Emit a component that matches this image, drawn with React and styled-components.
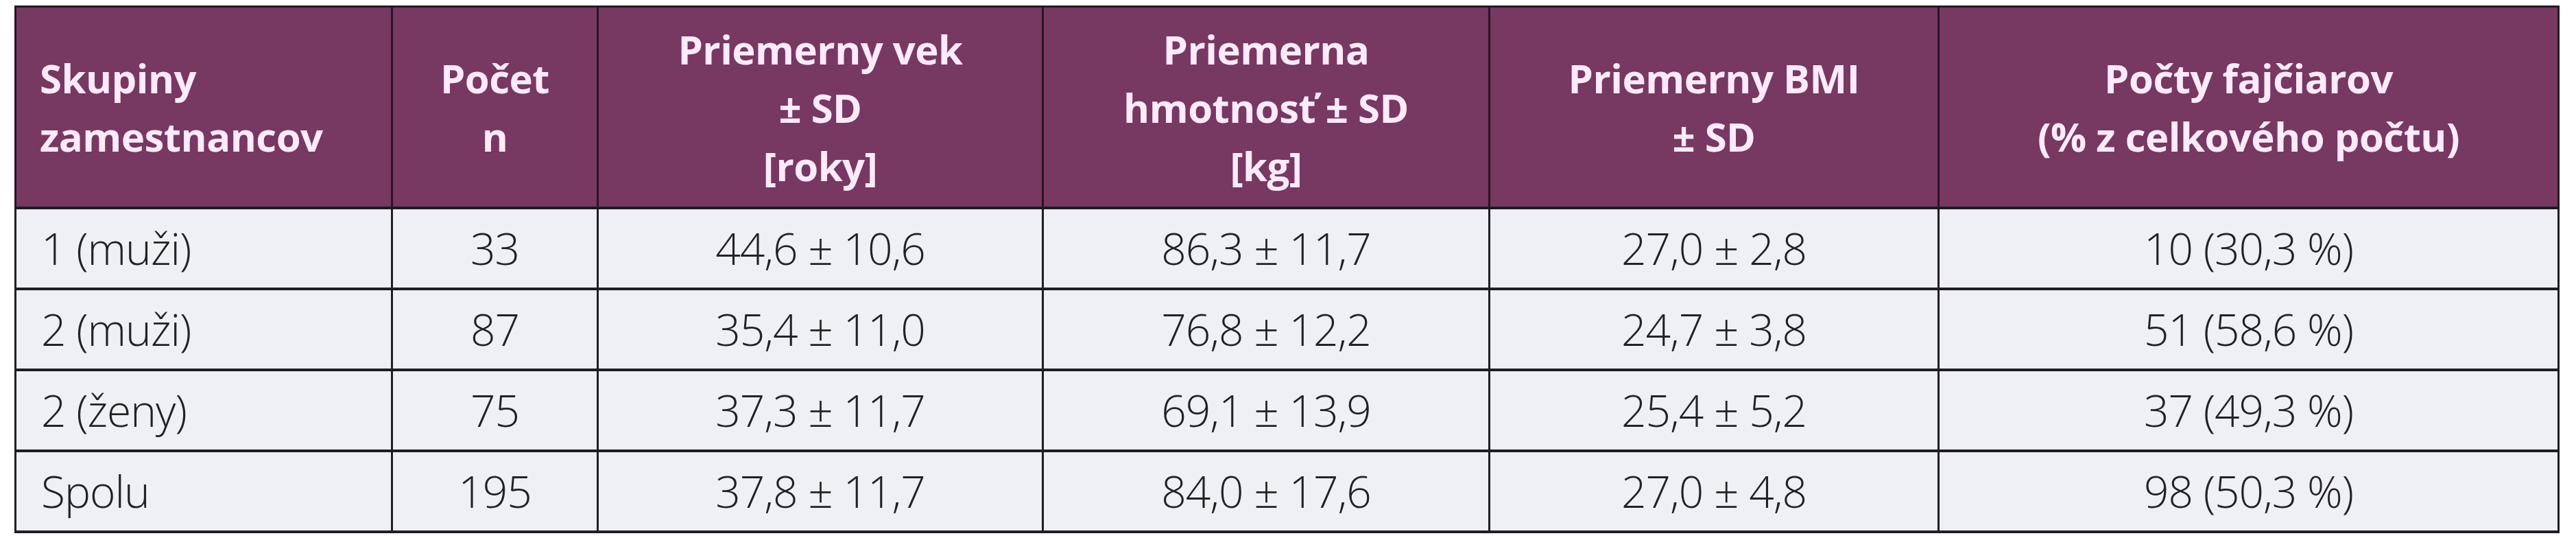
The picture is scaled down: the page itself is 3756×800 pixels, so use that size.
import styled, { createGlobalStyle } from "styled-components";

const GlobalStyle = createGlobalStyle`
  body {
    margin: 0;
    background: #fff;
  }
`;

const columns = [
  { width: 549, align: "left", head: ["Skupiny", "zamestnancov"] },
  { width: 300, align: "center", head: ["Počet", "n"] },
  { width: 649, align: "center", head: ["Priemerny vek", "± SD", "[roky]"] },
  { width: 651, align: "center", head: ["Priemerna", "hmotnosť ± SD", "[kg]"] },
  { width: 655, align: "center", head: ["Priemerny BMI", "± SD"] },
  { width: 904, align: "center", head: ["Počty fajčiarov", "(% z celkového počtu)"] },
];

const rows = [
  ["1 (muži)", "33", "44,6 ± 10,6", "86,3 ± 11,7", "27,0 ± 2,8", "10 (30,3 %)"],
  ["2 (muži)", "87", "35,4 ± 11,0", "76,8 ± 12,2", "24,7 ± 3,8", "51 (58,6 %)"],
  ["2 (ženy)", "75", "37,3 ± 11,7", "69,1 ± 13,9", "25,4 ± 5,2", "37 (49,3 %)"],
  ["Spolu", "195", "37,8 ± 11,7", "84,0 ± 17,6", "27,0 ± 4,8", "98 (50,3 %)"],
];

const App = () => {
  return (
    <>
      <GlobalStyle />
      <Wrapper>
        <Table>
          <colgroup>
            {columns.map((c, i) => (
              <col key={i} style={{ width: c.width }} />
            ))}
          </colgroup>
          <thead>
            <tr>
              {columns.map((c, i) => (
                <HeadCell key={i} $align={c.align}>
                  {c.head.map((line, j) => (
                    <HeadLine key={j}>{line}</HeadLine>
                  ))}
                </HeadCell>
              ))}
            </tr>
          </thead>
          <tbody>
            {rows.map((row, i) => (
              <Row key={i}>
                {row.map((val, j) => (
                  <Cell key={j} $align={columns[j].align}>
                    {val}
                  </Cell>
                ))}
              </Row>
            ))}
          </tbody>
        </Table>
      </Wrapper>
    </>
  );
};

const Wrapper = styled.div`
  padding: 8px 0 0 21px;
`;

const Table = styled.table`
  border-collapse: collapse;
  table-layout: fixed;
  width: 3708px;
  border: 3px solid #241a22;
`;

const HeadCell = styled.th`
  height: 290px;
  background: #773862;
  color: #ffeafa;
  font-family: "Open Sans", "Liberation Sans", sans-serif;
  font-weight: 700;
  font-size: 58px;
  line-height: 85px;
  text-align: ${(p) => p.$align};
  vertical-align: middle;
  padding: 0 34px;
  border-left: 3px solid #2a1426;
  border-bottom: 4px solid #1e1a20;
  letter-spacing: -0.5px;
`;

const HeadLine = styled.div`
  white-space: nowrap;
`;

const Row = styled.tr`
  height: 118px;
`;

const Cell = styled.td`
  background: #efeff6;
  color: #222226;
  font-family: "Open Sans", "Liberation Sans", sans-serif;
  font-weight: 300;
  font-size: 64px;
  line-height: 1;
  text-align: ${(p) => p.$align};
  vertical-align: middle;
  padding: 0 36px;
  border: 4px solid #1e1e24;
  border-top-width: 4px;
  border-left-width: 3px;
  border-right-width: 3px;
  white-space: nowrap;
  letter-spacing: -1px;
`;

export default App;
